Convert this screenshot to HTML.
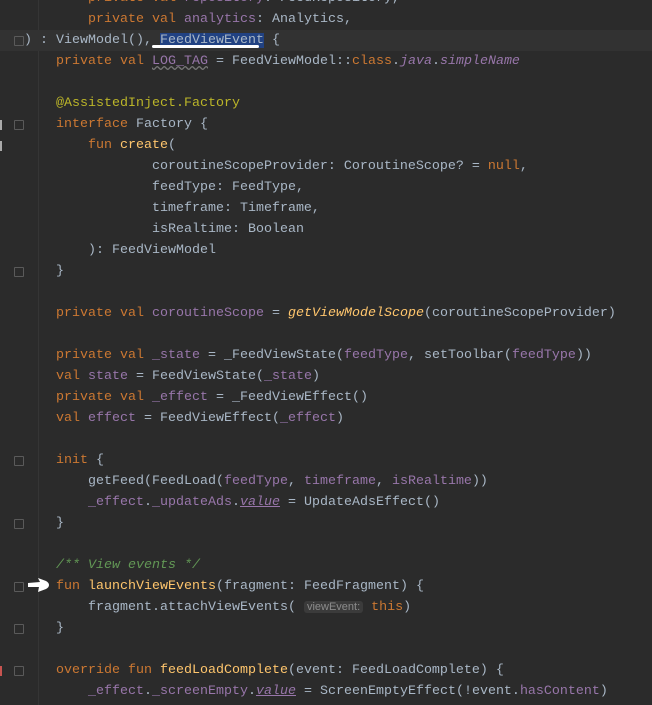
<!DOCTYPE html>
<html><head><meta charset="utf-8"><style>
html,body{margin:0;height:705px;overflow:hidden}
body{width:652px;background:#2b2b2b;position:relative;font-family:"Liberation Mono","DejaVu Sans Mono",monospace;font-size:13.33px;color:#a9b7c6}
#w{position:absolute;left:0;top:2px;width:652px;height:705px}
.l{position:absolute;left:24px;height:21px;line-height:21px;white-space:pre}
.k{color:#cc7832}.p{color:#9876aa}.f{color:#ffc66d}.a{color:#bbb529}.c{color:#629755;font-style:italic}.i{font-style:italic}
.u{text-decoration:underline}
.hl{position:absolute;left:0;width:652px;height:21px;top:28px;background:#323232}
.sel{background:#214283}
.hint{font-family:"Liberation Sans",sans-serif;font-size:11px;color:#8c8c8c;background:#3b3b3b;border-radius:3px;padding:0 3px}
.fold{position:absolute;left:14px;width:8px;height:8px;border:1px solid #5a5a5a;border-radius:1px}
.gl{position:absolute;left:38px;top:0;width:1px;height:705px;background:#353535}
</style></head><body>
<div class="gl"></div>
<div id="w">
<div class="hl"></div>
<div class="fold" style="top:34px"></div><div class="fold" style="top:118px"></div><div class="fold" style="top:265px"></div><div class="fold" style="top:454px"></div><div class="fold" style="top:517px"></div><div class="fold" style="top:580px"></div><div class="fold" style="top:622px"></div><div class="fold" style="top:664px"></div>
<div style="position:absolute;left:0;top:118px;width:2px;height:10px;background:#aaa"></div>
<div style="position:absolute;left:0;top:139px;width:2px;height:10px;background:#aaa"></div>
<div style="position:absolute;left:0;top:664px;width:2px;height:10px;background:#c75450"></div>
<div class="l" style="top:-14px">        <span class="k">private val </span><span class="p">repository</span>: FeedRepository,</div>
<div class="l" style="top:7px">        <span class="k">private val </span><span class="p">analytics</span>: Analytics,</div>
<div class="l" style="top:28px">) : ViewModel(), <span class="sel">FeedViewEvent</span> {</div>
<div style="position:absolute;left:152px;top:43px;width:107px;height:3px;background:#fff;border-radius:2px"></div>
<div class="l" style="top:49px">    <span class="k">private val </span><span class="p" style="text-decoration:underline wavy #777">LOG_TAG</span> = FeedViewModel::<span class="k">class</span>.<span class="p i">java</span>.<span class="p i">simpleName</span></div>
<div class="l" style="top:91px">    <span class="a">@AssistedInject.Factory</span></div>
<div class="l" style="top:112px">    <span class="k">interface </span>Factory {</div>
<div class="l" style="top:133px">        <span class="k">fun </span><span class="f">create</span>(</div>
<div class="l" style="top:154px">                coroutineScopeProvider: CoroutineScope? = <span class="k">null</span>,</div>
<div class="l" style="top:175px">                feedType: FeedType,</div>
<div class="l" style="top:196px">                timeframe: Timeframe,</div>
<div class="l" style="top:217px">                isRealtime: Boolean</div>
<div class="l" style="top:238px">        ): FeedViewModel</div>
<div class="l" style="top:259px">    }</div>
<div class="l" style="top:301px">    <span class="k">private val </span><span class="p">coroutineScope</span> = <span class="f i">getViewModelScope</span>(coroutineScopeProvider)</div>
<div class="l" style="top:343px">    <span class="k">private val </span><span class="p">_state</span> = _FeedViewState(<span class="p">feedType</span>, setToolbar(<span class="p">feedType</span>))</div>
<div class="l" style="top:364px">    <span class="k">val </span><span class="p">state</span> = FeedViewState(<span class="p">_state</span>)</div>
<div class="l" style="top:385px">    <span class="k">private val </span><span class="p">_effect</span> = _FeedViewEffect()</div>
<div class="l" style="top:406px">    <span class="k">val </span><span class="p">effect</span> = FeedViewEffect(<span class="p">_effect</span>)</div>
<div class="l" style="top:448px">    <span class="k">init </span>{</div>
<div class="l" style="top:469px">        getFeed(FeedLoad(<span class="p">feedType</span>, <span class="p">timeframe</span>, <span class="p">isRealtime</span>))</div>
<div class="l" style="top:490px">        <span class="p">_effect</span>.<span class="p">_updateAds</span>.<span class="p i u">value</span> = UpdateAdsEffect()</div>
<div class="l" style="top:511px">    }</div>
<div class="l" style="top:553px">    <span class="c">/** View events */</span></div>
<div class="l" style="top:574px">    <span class="k">fun </span><span class="f">launchViewEvents</span>(fragment: FeedFragment) {</div>
<div class="l" style="top:595px">        fragment.attachViewEvents( <span class="hint">viewEvent:</span> <span class="k">this</span>)</div>
<div class="l" style="top:616px">    }</div>
<div class="l" style="top:658px">    <span class="k">override fun </span><span class="f">feedLoadComplete</span>(event: FeedLoadComplete) {</div>
<div class="l" style="top:679px">        <span class="p">_effect</span>.<span class="p">_screenEmpty</span>.<span class="p i u">value</span> = ScreenEmptyEffect(!event.<span class="p">hasContent</span>)</div>
<div class="l" style="top:700px">    }</div>
<svg style="position:absolute;left:26px;top:574px" width="26" height="18" viewBox="0 0 26 18"><path d="M2 7 L14 6 L12 2 L20 5 C24 7 24 11 20 13 L12 16 L13 11 L2 11 Z" fill="#fff"/></svg>
</div>
</body></html>
